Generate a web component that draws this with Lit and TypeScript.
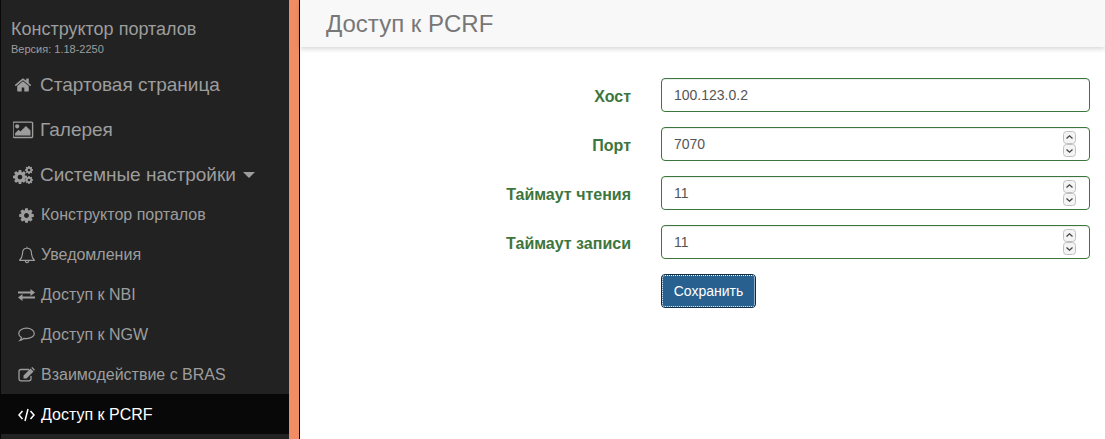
import { LitElement, html, css, svg } from "lit";
import { customElement } from "lit/decorators.js";

const GEAR = "M1152 896q0-106-75-181t-181-75-181 75-75 181 75 181 181 75 181-75 75-181zm512-109v222q0 12-8 23t-20 13l-185 28q-19 54-39 91 35 50 107 138 10 12 10 25t-9 23q-27 37-99 108t-94 71q-12 0-26-9l-138-108q-44 23-91 38-16 136-29 186-7 28-36 28h-222q-14 0-24.500-8.500t-11.500-21.500l-28-184q-49-16-90-37l-141 107q-10 9-25 9-14 0-25-11-126-114-165-168-7-10-7-23 0-12 8-23 15-21 51-66.500t54-70.500q-27-50-41-99l-183-27q-13-2-21-12.500t-8-23.500v-222q0-12 8-23t19-13l186-28q14-46 39-92-40-57-107-138-10-12-10-24 0-10 9-23 26-36 98.500-107.500t94.500-71.500q13 0 26 10l138 107q44-23 91-38 16-136 29-186 7-28 36-28h222q14 0 24.500 8.500t11.500 21.500l28 184q49 16 90 37l142-107q9-9 24-9 13 0 25 10 129 119 165 170 7 8 7 22 0 12-8 23-15 21-51 66.500t-54 70.500q26 50 41 98l183 28q13 2 21 12.500t8 23.500z";

const icons = {
  home: html`<svg class="ic i-home" viewBox="0 0 1792 1792"><path fill="currentColor" d="M1472 992v480q0 26-19 45t-45 19h-384v-384h-256v384h-384q-26 0-45-19t-19-45v-480q0-1 .5-3t.5-3l575-474 575 474q1 2 1 6zm223-69l-62 74q-8 9-21 11h-3q-13 0-21-7l-692-577-692 577q-12 8-24 7-13-2-21-11l-62-74q-8-10-7-23.500t11-21.500l719-599q32-26 76-26t76 26l244 204v-195q0-14 9-23t23-9h192q14 0 23 9t9 23v408l219 182q10 8 11 21.500t-7 23.500z"/></svg>`,
  picture: html`<svg class="ic i-pic" viewBox="0 0 1920 1792"><path fill="currentColor" d="M576 576q0 80-56 136t-136 56-136-56-56-136 56-136 136-56 136 56 56 136zm1024 384v448h-1408v-192l320-320 160 160 512-512zm96-704h-1600q-13 0-22.500 9.500t-9.500 22.500v1216q0 13 9.500 22.500t22.500 9.500h1600q13 0 22.500-9.500t9.500-22.500v-1216q0-13-9.500-22.500t-22.500-9.500zm160 32v1216q0 66-47 113t-113 47h-1600q-66 0-113-47t-47-113v-1216q0-66 47-113t113-47h1600q66 0 113 47t47 113z"/></svg>`,
  gears: html`<svg class="ic i-gears" viewBox="0 0 20 18">
    ${svg`<g fill="currentColor"><path transform="translate(-1.170 2.830) scale(.0091)" d="${GEAR}"/><path transform="translate(11.330 -.670) scale(.0052)" d="${GEAR}"/><path transform="translate(11.330 9.330) scale(.0052)" d="${GEAR}"/></g>`}</svg>`,
  gear: html`<svg class="ic i-gear" viewBox="0 0 1792 1792"><path fill="currentColor" d="${GEAR}"/></svg>`,
  bell: html`<svg class="ic i-bell" viewBox="0 0 17 17"><path fill="none" stroke="currentColor" stroke-width="1.100" stroke-linejoin="round" d="M1.500 13.500c2-1.600 2.700-4 2.800-7.200.1-2.500 1.800-4.200 4.200-4.200s4.100 1.700 4.200 4.200c.1 3.200.8 5.600 2.800 7.200zM7 13.800c0 1.300.7 2 1.500 2s1.500-.7 1.500-2M8.500 2V.8"/></svg>`,
  exchange: html`<svg class="ic i-ex" viewBox="0 0 17 14"><path fill="currentColor" d="M0 3.500h12.500V1L17 4.500 12.500 8V5.500H0zM17 8.500H4.500V6L0 9.500 4.500 13v-2.500H17z"/></svg>`,
  comment: html`<svg class="ic i-cm" viewBox="0 0 17 15"><path fill="none" stroke="currentColor" stroke-width="1.200" d="M8.500 1.200c4.200 0 7.800 2.300 7.800 5.200s-3.600 5.200-7.800 5.200c-.9 0-1.700-.1-2.500-.3-1 .9-2.300 1.800-4 2.200.9-1 1.400-2 1.500-3C1.900 9.500.7 8 .7 6.400.7 3.500 4.300 1.200 8.500 1.200z"/></svg>`,
  edit: html`<svg class="ic i-edit" viewBox="0 0 17 15"><path fill="none" stroke="currentColor" stroke-width="1.300" d="M13 9v2.800c0 1.200-.8 2-2 2H3c-1.200 0-2-.8-2-2V4.500c0-1.200.8-2 2-2h8"/><path fill="currentColor" d="M5.500 8.500 12.500 1.500 15.500 4.500 8.500 11.500H5.500zM13.300.8 14.300 0l2.700 2.700-1 1z"/></svg>`,
  code: html`<svg class="ic i-ex" viewBox="0 0 17 14"><path fill="none" stroke="currentColor" stroke-width="1.500" d="M4.500 3 1 7l3.500 4M12.500 3 16 7l-3.500 4M10 1 7 13"/></svg>`,
};

const nav: { label: string; icon: keyof typeof icons; kind: string }[] = [
  { label: "Стартовая страница", icon: "home", kind: "big" },
  { label: "Галерея", icon: "picture", kind: "big" },
  { label: "Системные настройки", icon: "gears", kind: "big caret" },
  { label: "Конструктор порталов", icon: "gear", kind: "sub" },
  { label: "Уведомления", icon: "bell", kind: "sub" },
  { label: "Доступ к NBI", icon: "exchange", kind: "sub" },
  { label: "Доступ к NGW", icon: "comment", kind: "sub" },
  { label: "Взаимодействие с BRAS", icon: "edit", kind: "sub" },
  { label: "Доступ к PCRF", icon: "code", kind: "sub active" },
];

const fields = [
  { label: "Хост", value: "100.123.0.2", spin: false },
  { label: "Порт", value: "7070", spin: true },
  { label: "Таймаут чтения", value: "11", spin: true },
  { label: "Таймаут записи", value: "11", spin: true },
];

@customElement("app-root")
export class AppRoot extends LitElement {
  static styles = css`
    :host {
      display: flex;
      width: 1105px;
      height: 439px;
      overflow: hidden;
      background: #fff;
      font-family: "Liberation Sans", Arial, sans-serif;
      font-size: 14px;
      color: #333;
    }
    .side {
      width: 288px;
      flex: none;
      background: #222;
      border-left: 1px solid #080808;
      color: #9d9d9d;
    }
    .band {
      width: 10px;
      flex: none;
      background: #f08d64;
      border-right: 1px solid #000;
    }
    .brand {
      padding: 19px 0 0 10px;
      height: 40px;
    }
    .brand-title {
      font-size: 18px;
      line-height: 20px;
    }
    .brand-ver {
      font-size: 11px;
      line-height: 12px;
      margin-top: 4px;
    }
    .item {
      display: flex;
      align-items: center;
      box-sizing: border-box;
    }
    .big {
      height: 45px;
      font-size: 19px;
      padding: 6px 0 0 12px;
    }
    .sub {
      height: 40px;
      font-size: 16px;
      padding: 2px 0 0 17px;
    }
    .active {
      background: #080808;
      color: #fff;
    }
    .slot {
      display: flex;
      align-items: center;
    }
    .big .slot {
      width: 27px;
    }
    .sub .slot {
      width: 23px;
    }
    .ic {
      display: block;
    }
    .i-home {
      width: 18px;
      height: 18px;
      margin-left: 1px;
    }
    .i-pic {
      width: 21px;
      height: 19.6px;
    }
    .i-gears {
      width: 20px;
      height: 18px;
    }
    .i-gear {
      width: 17px;
      height: 17px;
    }
    .i-bell {
      width: 18px;
      height: 18px;
      margin-top: -1px;
    }
    .i-ex {
      width: 17px;
      height: 14px;
    }
    .i-cm {
      width: 17px;
      height: 15px;
      margin-top: -1px;
    }
    .i-edit {
      width: 17px;
      height: 15px;
      margin-top: -1px;
    }
    .caret {
      width: 0;
      height: 0;
      margin-left: 7px;
      border-top: 6px solid #9d9d9d;
      border-left: 6px solid transparent;
      border-right: 6px solid transparent;
    }
    main {
      flex: 1;
      min-width: 0;
    }
    header {
      height: 47px;
      background: #f8f8f8;
      box-shadow: 0 2px 5px rgba(0, 0, 0, 0.16);
      padding-left: 26px;
      font-size: 24px;
      line-height: 47px;
      color: #777;
    }
    form {
      display: flex;
      flex-direction: column;
      gap: 15px;
      padding: 31px 15px 0 0;
    }
    .row {
      display: grid;
      grid-template-columns: 331px 429px;
      column-gap: 30px;
      align-items: center;
    }
    .lbl {
      text-align: right;
      font-weight: 700;
      font-size: 16px;
      padding-top: 4px;
      color: #3c763d;
    }
    .box {
      position: relative;
      box-sizing: border-box;
      height: 34px;
      padding: 0 12px;
      border: 1px solid #3c763d;
      border-radius: 4px;
      font-size: 14px;
      line-height: 32px;
      color: #555;
      box-shadow: inset 0 1px 1px rgba(0, 0, 0, 0.075);
    }
    .spin {
      position: absolute;
      right: 13px;
      top: 3px;
      display: flex;
      flex-direction: column;
    }
    .spin svg {
      display: block;
    }
    .btn {
      grid-column: 2;
      justify-self: start;
      box-sizing: border-box;
      height: 34px;
      width: 95px;
      padding: 0;
      border: 1px solid #122b40;
      border-radius: 4px;
      background: #286090;
      color: #fff;
      font: 14px "Liberation Sans", Arial, sans-serif;
      outline: 1px dotted #fff;
      outline-offset: -2px;
    }
  `;

  private spinner() {
    return html`<span class="spin">
      <svg width="13" height="13" viewBox="0 0 13 13"><rect x=".5" y=".5" width="12" height="12" rx="3" fill="#f4f4f4" stroke="#c0c0c0"/><path d="M3.500 7.500 6.500 4.800 9.500 7.500" fill="none" stroke="#444" stroke-width="1.300"/></svg>
      <svg width="13" height="13" viewBox="0 0 13 13"><rect x=".5" y=".5" width="12" height="12" rx="3" fill="#f4f4f4" stroke="#c0c0c0"/><path d="M3.500 5.500 6.500 8.200 9.500 5.500" fill="none" stroke="#444" stroke-width="1.300"/></svg>
    </span>`;
  }

  render() {
    return html`
      <aside class="side">
        <div class="brand">
          <div class="brand-title">Конструктор порталов</div>
          <div class="brand-ver">Версия: 1.18-2250</div>
        </div>
        ${nav.map(
          (n) => html`<div class="item ${n.kind.replace("caret", "")}">
            <span class="slot">${icons[n.icon]}</span>
            <span>${n.label}</span>
            ${n.kind.includes("caret") ? html`<span class="caret"></span>` : ""}
          </div>`
        )}
      </aside>
      <div class="band"></div>
      <main>
        <header>Доступ к PCRF</header>
        <form>
          ${fields.map(
            (f) => html`<div class="row">
              <div class="lbl">${f.label}</div>
              <div class="box">${f.value}${f.spin ? this.spinner() : ""}</div>
            </div>`
          )}
          <div class="row"><button type="button" class="btn">Сохранить</button></div>
        </form>
      </main>
    `;
  }
}
